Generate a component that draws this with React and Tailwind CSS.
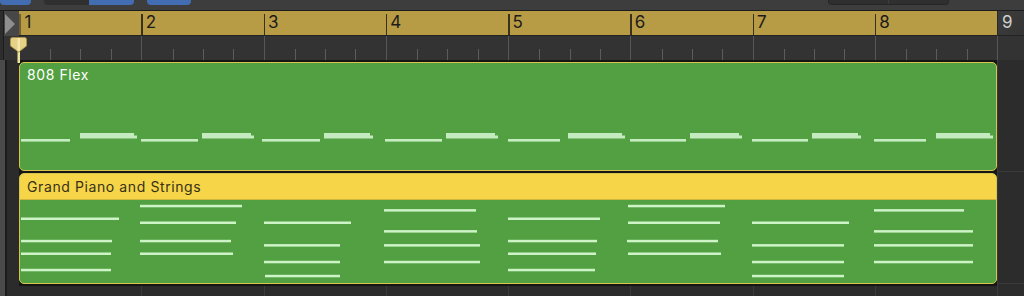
const bars = [0, 1, 2, 3, 4, 5, 6, 7];

// 808 notes, absolute page x
const lowNotes = [[21, 70], [141, 198], [262, 320], [385, 442], [508, 560], [630, 686], [752, 808], [874, 926]];
const highNotes = [[80, 137], [202, 254], [324, 373], [446, 498], [568, 625], [690, 742], [812, 861], [936, 993]];

// piano notes: [y, x1, x2], absolute page coords
const pianoNotes = [
  [218.7, 21, 119], [241, 21, 112], [253.7, 21, 111], [270, 21, 111],
  [206, 140, 242], [222.7, 140, 236], [241, 140, 231], [253.7, 140, 233],
  [222.7, 264, 351], [245.3, 264, 340], [262, 264, 340], [276, 265, 340],
  [210.3, 384, 476], [231.3, 384, 477], [245.3, 384, 480], [262, 384, 480],
  [218.7, 508, 600], [241, 508, 597], [253.7, 508, 596], [270, 508, 595],
  [206, 628, 725], [222.7, 628, 720], [241, 627, 718], [253.7, 628, 721],
  [222.7, 752, 849], [245.3, 752, 844], [262, 752, 844], [276, 752, 844],
  [210.3, 874, 964], [231.3, 874, 973], [245.3, 874, 973], [262, 874, 973],
];

const TopStrip = () => (
  <div className="h-[11px] bg-[#3d3d3d] border-b border-[#1c1c1c] flex items-start shrink-0">
    <div className="w-[31px] h-[5px] bg-[#436db3] rounded-b-[4px]" />
    <div className="ml-[13px] flex w-[90px] h-[5px] rounded-b-[4px] overflow-hidden">
      <div className="w-[45px] bg-[#2f2f2f]" />
      <div className="flex-1 bg-[#436db3]" />
    </div>
    <div className="ml-[13px] w-[44px] h-[5px] bg-[#436db3] rounded-b-[4px]" />
    <div className="ml-auto mr-[75px] flex w-[121px] h-[5px] rounded-b-[4px] overflow-hidden border-x border-b border-[#262626]">
      <div className="w-[60px] bg-[#2f2f2f] border-r border-[#3e3e3e]" />
      <div className="flex-1 bg-[#2f2f2f]" />
    </div>
  </div>
);

const Ruler = () => (
  <div className="h-[25px] flex shrink-0">
    <div className="w-[19px] flex">
      <div className="w-[4px] bg-[#2d2d2d] border-r border-[#1c1c1c]" />
      <div className="flex-1 bg-[#474747] flex items-center">
        <svg width="12" height="22" viewBox="0 0 12 22">
          <path d="M1 1 L11 11 L1 21 Z" fill="#8f8f8f" />
        </svg>
      </div>
    </div>
    <div className="w-[978px] grid grid-cols-8 bg-[#b89b45] border-b border-[#232323]">
      {bars.map((i) => (
        <div key={i} className="flex items-start">
          <div className={`w-[1.5px] h-[21px] mt-[3px] ${i === 0 ? 'bg-[#6e5f2e]' : 'bg-[#3a311c]'}`} />
          <span className={`${i === 0 ? 'ml-[4px]' : 'ml-[3px]'} text-[17px] leading-[20px] pt-[1px] text-[#1c1c1c]`}>{i + 1}</span>
        </div>
      ))}
    </div>
    <div className="flex-1 bg-gradient-to-br from-[#3c3c3c] to-[#353535] border-b border-[#232323] border-l border-l-[#2a2a2a] pl-[4px]">
      <span className="text-[17px] leading-[20px] pt-[1px] block text-[#cfcfcf]">9</span>
    </div>
  </div>
);

const BeatRow = () => (
  <div className="h-[24px] flex shrink-0 bg-[#333333]">
    <div className="w-[19px] flex">
      <div className="w-[4px] bg-[#2d2d2d] border-r border-[#1c1c1c]" />
      <div className="flex-1" />
    </div>
    <div className="w-[978px] grid grid-cols-8">
      {bars.map((i) => (
        <div key={i} className={`grid grid-cols-4 ${i === 0 ? '' : 'border-l border-[#575757]'}`}>
          {[0, 1, 2, 3].map((b) => (
            <div key={b} className="flex items-end">
              {b > 0 && <div className="w-px h-[11px] bg-[#5c5c5c]" />}
            </div>
          ))}
        </div>
      ))}
    </div>
    <div className="flex-1 border-l border-[#575757]" />
  </div>
);

const DrumTrack = () => (
  <div className="h-[109px] relative rounded-[5px] border border-[#d8c64c] bg-[#52a042] overflow-hidden">
    <svg className="absolute left-[-1px] top-[-1px]" width="978" height="109" viewBox="0 0 978 109">
      {lowNotes.map(([a, b], i) => (
        <rect key={'l' + i} x={a - 19} y={139 - 62} width={b - a} height="2.6" fill="#c6edc0" />
      ))}
      {highNotes.map(([a, b], i) => (
        <g key={'h' + i} fill="#c4eabf">
          <rect x={a - 19} y={133 - 62} width={b - a - 3} height="4.5" />
          <rect x={a - 19} y={135.5 - 62} width={b - a} height="3" />
        </g>
      ))}
    </svg>
    <div className="relative pl-[7px] pt-[3px] text-[14px] leading-[17px] tracking-[0.6px] text-white">808 Flex</div>
  </div>
);

const PianoTrack = () => (
  <div className="h-[111px] relative rounded-[5px] border border-[#d8c64c] bg-[#52a042] overflow-hidden flex flex-col">
    <div className="h-[26px] bg-[#f6d548] border-b border-[#cdb53e] pl-[7px] pt-[4px] text-[14px] leading-[17px] tracking-[0.6px] text-[#37311a]">
      Grand Piano and Strings
    </div>
    <div className="flex-1" />
    <svg className="absolute left-[-1px] top-[-1px]" width="978" height="111" viewBox="0 0 978 111">
      {pianoNotes.map(([y, a, b], i) => (
        <rect key={i} x={a - 19} y={y - 1.2 - 173} width={b - a} height="2.5" fill="#cdf3c6" />
      ))}
    </svg>
  </div>
);

const Tracks = () => (
  <div className="flex-1 flex min-h-0">
    <div className="w-[19px] flex">
      <div className="w-[5px] bg-[#4a4a4a]" />
      <div className="w-[2px] bg-[#1b1b1b]" />
      <div className="flex-1 bg-[#2b2b2b]" />
    </div>
    <div className="w-[978px] flex flex-col bg-[#151515]">
      <div className="h-[2px] shrink-0" />
      <DrumTrack />
      <div className="h-[2px] shrink-0" />
      <PianoTrack />
      <div className="h-[2px] shrink-0" />
      <div className="flex-1 grid grid-cols-8 bg-[#2b2b2b]">
        {bars.map((i) => (
          <div key={i} className={i === 0 ? '' : 'border-l border-[#3b3b3b]'} />
        ))}
      </div>
    </div>
    <div className="flex-1 flex flex-col bg-[#2c2c2c] border-l border-[#3b3b3b]">
      <div className="h-[112px] border-b border-[#3a3a3a]" />
      <div className="h-[112px] border-b border-[#3a3a3a]" />
    </div>
  </div>
);

const Playhead = () => (
  <svg className="absolute left-[10px] top-[37px]" width="17" height="26" viewBox="0 0 17 26">
    <rect x="7.5" y="8" width="2.5" height="18" fill="#eee29c" />
    <path d="M2.5 0.5 H14.5 Q16.5 0.5 16.5 2.5 V9 L8.7 15 L0.5 9 V2.5 Q0.5 0.5 2.5 0.5 Z" fill="#e5d287" stroke="#a9934b" strokeWidth="1" />
    <rect x="7.5" y="1" width="2.5" height="13" fill="#f3e9ad" />
  </svg>
);

export default function App() {
  return (
    <div className="w-[1024px] h-[296px] relative overflow-hidden flex flex-col bg-[#2a2a2a] font-['Inter','Liberation_Sans',sans-serif]">
      <TopStrip />
      <Ruler />
      <BeatRow />
      <Tracks />
      <Playhead />
    </div>
  );
}
